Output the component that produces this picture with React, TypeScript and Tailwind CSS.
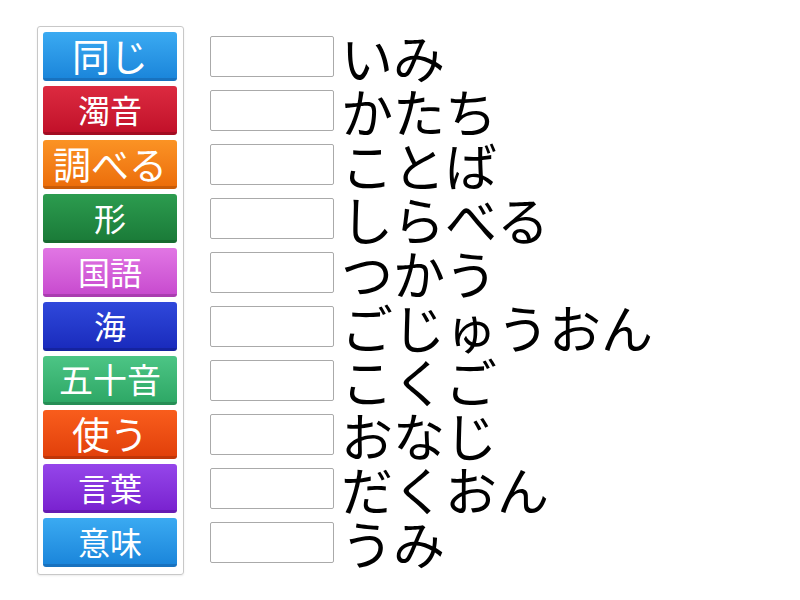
import React from 'react';

const tiles = [
  { label: '同じ', cls: 'from-[#3aaaf2] to-[#1b86db] border-[#1872bf]', size: 'text-[38px]' },
  { label: '濁音', cls: 'from-[#dc2a40] to-[#c2102a] border-[#a30c22]', size: 'text-[32px]' },
  { label: '調べる', cls: 'from-[#fb9324] to-[#ec6e0a] border-[#c95c08]', size: 'text-[38px]' },
  { label: '形', cls: 'from-[#2c9c4f] to-[#1b7c39] border-[#176a30]', size: 'text-[32px]' },
  { label: '国語', cls: 'from-[#e176e4] to-[#c84bcf] border-[#aa3cb0]', size: 'text-[32px]' },
  { label: '海', cls: 'from-[#3048db] to-[#1a2bbd] border-[#15239f]', size: 'text-[32px]' },
  { label: '五十音', cls: 'from-[#4cc585] to-[#2ea866] border-[#268e55]', size: 'text-[34px]' },
  { label: '使う', cls: 'from-[#f95d1c] to-[#e2400a] border-[#c03608]', size: 'text-[38px]' },
  { label: '言葉', cls: 'from-[#9545ea] to-[#7a22d0] border-[#661bb2]', size: 'text-[32px]' },
  { label: '意味', cls: 'from-[#3aaaf2] to-[#1b86db] border-[#1872bf]', size: 'text-[32px]' },
];

const words = ['いみ', 'かたち', 'ことば', 'しらべる', 'つかう', 'ごじゅうおん', 'こくご', 'おなじ', 'だくおん', 'うみ'];

export default function App() {
  return (
    <div
      className="w-[800px] h-[600px] bg-white flex items-start pt-[26px] pl-[37px]"
      style={{ fontFamily: '"Noto Sans CJK JP", "Noto Sans", sans-serif' }}
    >
      <div className="w-[147px] border border-[#c8c8c8] rounded-[3px] pt-[5px] pb-[7px] pl-[5px] pr-[6px] flex flex-col gap-[5px] shadow-[0_1px_2px_rgba(0,0,0,0.08)]">
        {tiles.map((t) => (
          <div
            key={t.label}
            className={`h-[49px] rounded-[3px] bg-gradient-to-b border-b-[3px] ${t.cls} flex items-center justify-center text-white leading-none ${t.size}`}
          >
            {t.label}
          </div>
        ))}
      </div>
      <div className="ml-[26px] pt-[6px] flex flex-col gap-[5px]">
        {words.map((w) => (
          <div key={w} className="h-[49px] flex items-center">
            <div className="w-[124px] h-[41px] border border-[#aaaaaa] rounded-[2px] bg-white" />
            <div className="ml-[7px] text-[52px] leading-[49px] text-black whitespace-nowrap">{w}</div>
          </div>
        ))}
      </div>
    </div>
  );
}
